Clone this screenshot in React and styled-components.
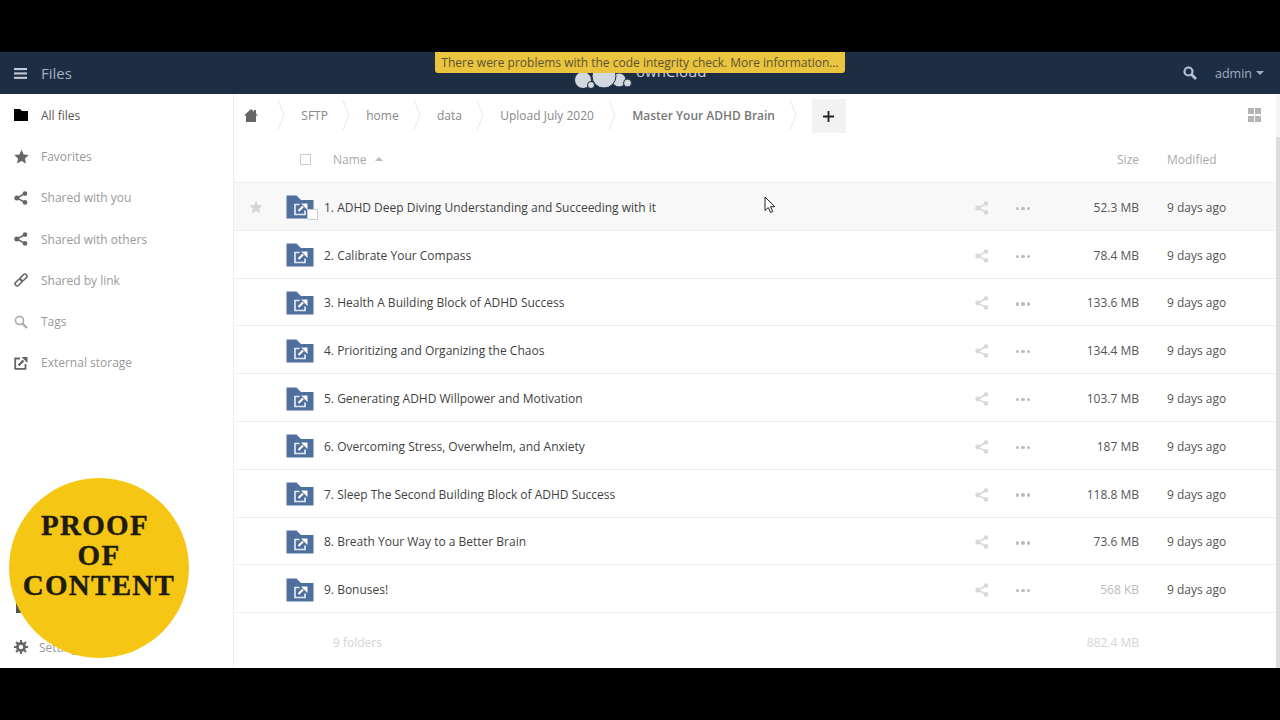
import React from 'react';
import styled, { createGlobalStyle } from 'styled-components';

const GlobalStyle = createGlobalStyle`
  html, body { margin: 0; padding: 0; background: #000; }
  body { font-family: "Open Sans", "Noto Sans", sans-serif; font-size: 13px; }
  * { box-sizing: border-box; }
`;

const Page = styled.div`
  position: relative;
  width: 1280px;
  height: 720px;
  padding: 52px 0;
  background: #000;
  overflow: hidden;
  display: flex;
  flex-direction: column;
`;

// Header
const Header = styled.header`
  position: relative;
  height: 42px;
  flex: none;
  background: #1d2d44;
  display: flex;
  align-items: center;
  padding: 0 16px 0 14px;
`;
const AppTitle = styled.div`
  margin-left: 14px;
  font-size: 15px;
  color: #a4afbd;
`;
const HeaderRight = styled.div`
  margin-left: auto;
  display: flex;
  align-items: center;
  color: #a4afbd;
`;
const UserName = styled.span`
  margin-left: 18px;
  font-size: 12.5px;
`;
const Caret = styled.span`
  width: 0;
  height: 0;
  margin-left: 4px;
  border-left: 4px solid transparent;
  border-right: 4px solid transparent;
  border-top: 4px solid #a4afbd;
`;
const Logo = styled.div`
  position: absolute;
  top: 8px;
  left: 574px;
  display: flex;
  align-items: flex-start;
`;
const LogoText = styled.span`
  margin: 1px 0 0 4px;
  font-size: 15px;
  line-height: 20px;
  color: #c9ced6;
`;
const Notice = styled.div`
  position: absolute;
  top: 0;
  left: 435px;
  width: 410px;
  height: 21px;
  background: #eac33f;
  border-radius: 0 0 3px 3px;
  color: #5b5330;
  font-size: 12px;
  line-height: 21px;
  text-align: center;
  white-space: nowrap;
`;

// Body
const Body = styled.div`
  flex: 1;
  min-height: 0;
  display: flex;
  background: #fff;
`;
const Sidebar = styled.nav`
  width: 234px;
  flex: none;
  border-right: 1px solid #eee;
  display: flex;
  flex-direction: column;
  padding-top: 0.5px;
`;
const NavItem = styled.div`
  height: 41.3px;
  flex: none;
  display: flex;
  align-items: center;
  padding-left: 14px;
  color: ${p => (p.$active ? '#555' : '#999')};
  font-size: 12px;
  white-space: nowrap;
`;
const NavIcon = styled.span`
  width: ${p => p.$width || 27}px;
  flex: none;
  display: flex;
  align-items: center;
  color: ${p => p.$color || '#666'};
`;
const NavBottom = styled.div`
  margin-top: auto;
`;

const Main = styled.main`
  flex: 1;
  min-width: 0;
  display: flex;
  flex-direction: column;
  overflow: hidden;
`;
const Breadcrumbs = styled.div`
  height: 42px;
  flex: none;
  display: flex;
  align-items: center;
  padding-left: 10px;
  padding-right: 15px;
`;
const HomeLink = styled.span`
  width: 33px;
  flex: none;
  display: flex;
  align-items: center;
  color: #666;
`;
const Crumb = styled.span`
  padding: 0 14px 0 16.3px;
  font-size: 12px;
  font-weight: ${p => (p.$current ? 600 : 400)};
  color: ${p => (p.$current ? '#777' : '#888')};
  white-space: nowrap;
`;
const Chevron = styled.svg`
  width: 8px;
  height: 32px;
  flex: none;
`;
const AddButton = styled.button`
  width: 34px;
  height: 34px;
  margin: 2px 0 0 14.500px;
  padding: 0;
  border: 0;
  border-radius: 2px;
  background: #f2f2f2;
  display: flex;
  align-items: center;
  justify-content: center;
`;
const ViewToggle = styled.span`
  margin-left: auto;
  display: grid;
  grid-template-columns: 6px 6px;
  grid-auto-rows: 6px;
  gap: 1.5px;
  & > i { background: #b4b4b4; }
`;

const TableHead = styled.div`
  height: 47px;
  flex: none;
  display: flex;
  align-items: center;
  border-bottom: 1px solid #eee;
  color: #aaa;
  font-size: 12px;
`;
const HeadCheck = styled.span`
  width: 11px;
  height: 11px;
  margin-left: 66px;
  border: 1px solid #ccc;
  background: #fff;
`;
const HeadName = styled.span`
  margin-left: 22px;
`;
const SortArrow = styled.span`
  width: 0;
  height: 0;
  margin-left: 8px;
  border-left: 4px solid transparent;
  border-right: 4px solid transparent;
  border-bottom: 4px solid #bbb;
`;
const HeadSize = styled.span`
  margin-left: auto;
`;
const DateCell = styled.span`
  width: 109px;
  margin-left: 28px;
  flex: none;
  color: ${p => p.$color || '#555'};
  font-size: 12px;
  white-space: nowrap;
`;

const Row = styled.div`
  height: 47.8px;
  flex: none;
  display: flex;
  align-items: center;
  padding-top: 2px;
  border-bottom: 1px solid #eee;
  background: ${p => (p.$hover ? '#f8f8f8' : '#fff')};
`;
const StarCell = styled.span`
  width: 52px;
  flex: none;
  padding-left: 15px;
  display: flex;
  align-items: center;
  color: #d6d6d6;
`;
const FolderCell = styled.span`
  position: relative;
  width: 38px;
  flex: none;
  display: flex;
  align-items: center;
`;
const RowCheck = styled.span`
  position: absolute;
  left: 21px;
  top: 14px;
  width: 11px;
  height: 11px;
  border: 1px solid #ccc;
  border-radius: 1px;
  background: #fff;
`;
const FileName = styled.span`
  width: 648px;
  flex: none;
  color: #3f3f3f;
  font-size: 12px;
  white-space: nowrap;
`;
const ShareAction = styled.span`
  width: 44px;
  flex: none;
  padding-left: 3px;
  margin-top: 1px;
  display: flex;
  align-items: center;
  justify-content: flex-start;
  color: #d8d8d8;
`;
const MoreAction = styled.span`
  flex: none;
  display: flex;
  gap: 2px;
  margin-top: 2px;
  & > i {
    width: 3.4px;
    height: 3.4px;
    border-radius: 50%;
    background: #bcbcbc;
  }
`;
const SizeCell = styled.span`
  margin-left: auto;
  color: ${p => p.$color};
  font-size: 12px;
  white-space: nowrap;
`;
const Summary = styled.div`
  height: 57px;
  flex: none;
  display: flex;
  align-items: center;
  padding-top: 2px;
  color: #d4d4d4;
  font-size: 12px;
`;
const SummaryCount = styled.span`
  margin-left: 99px;
`;

const ScrollTrack = styled.div`
  width: 4px;
  flex: none;
  background: #f4f4f4;
  display: flex;
  flex-direction: column;
`;
const ScrollThumb = styled.div`
  margin-top: 43px;
  flex: 1;
  background: #dcdcdc;
`;

// Overlays
const Badge = styled.div`
  position: absolute;
  left: 9px;
  top: 478px;
  width: 180px;
  height: 180px;
  border-radius: 50%;
  background: #f6c614;
  display: flex;
  flex-direction: column;
  align-items: center;
  padding-top: 32px;
  color: #1e1b10;
  font-family: "Liberation Serif", "DejaVu Serif", serif;
  font-weight: 700;
  font-size: 29px;
  line-height: 30px;
  letter-spacing: 1.3px;
  -webkit-text-stroke: 0.4px #1e1b10;
  & > span:first-child { margin-right: 8px; }
`;
const Pointer = styled.svg`
  position: absolute;
  left: 764px;
  top: 196px;
`;

const ShareIcon = ({ size = 14 }) => (
  <svg width={size} height={size} viewBox="0 0 14 14" fill="currentColor">
    <circle cx="2.8" cy="7" r="2.5" />
    <circle cx="11" cy="2.6" r="2.3" />
    <circle cx="11" cy="11.4" r="2.3" />
    <path d="M2.8 7 11 2.6M2.8 7 11 11.4" stroke="currentColor" strokeWidth="1.5" fill="none" />
  </svg>
);

const StarIcon = ({ size = 14 }) => (
  <svg width={size} height={size} viewBox="0 0 24 24" fill="currentColor">
    <path d="M12 1l3.4 7.6 8.2.9-6.1 5.5 1.7 8.1L12 19l-7.2 4.1 1.7-8.1L.4 9.5l8.2-.9z" />
  </svg>
);

const ExternalIcon = ({ size = 14, color = '#666' }) => (
  <svg width={size} height={size} viewBox="0 0 14 14" fill="none">
    <path d="M6 2.500H1.200v10.300h10.300V8" stroke={color} strokeWidth="1.800" />
    <path d="M4.500 9.500 9.500 4.500" stroke={color} strokeWidth="2.400" />
    <path d="M7.500 1H13.500V7z" fill={color} />
  </svg>
);

const FolderIcon = () => (
  <svg width="28" height="24" viewBox="0 0 28 24">
    <path d="M0.500 0.500h10l4.500 4.500h12.500v18.500H0.500z" fill="#4f6f9d" />
    <path d="M13.500 9.500H9v10h10V15.500" stroke="#e3e9f1" strokeWidth="1.700" fill="none" />
    <path d="M12.500 16 17 11.500" stroke="#fff" strokeWidth="2.200" />
    <path d="M15 8.500H21.500V15z" fill="#fff" />
  </svg>
);

const Hamburger = () => (
  <svg width="13" height="11" viewBox="0 0 13 11" fill="#c3cbd5">
    <rect y="0" width="13" height="2.100" />
    <rect y="4.400" width="13" height="2.100" />
    <rect y="8.800" width="13" height="2.100" />
  </svg>
);

const SearchIcon = ({ size = 14, color = '#b9c2ce', weight = 2.2 }) => (
  <svg width={size} height={size} viewBox="0 0 14 14" fill="none" stroke={color}>
    <circle cx="5.500" cy="5.500" r="4" strokeWidth={weight} />
    <path d="M8.500 8.500 13 13" strokeWidth={weight + 0.6} />
  </svg>
);

const CloudLogo = () => (
  <svg width="58" height="30" viewBox="0 0 58 30" fill="#d3d7de" stroke="#1d2d44" strokeWidth="1">
    <circle cx="9" cy="20" r="8.500" />
    <circle cx="45" cy="20" r="7" />
    <circle cx="17" cy="25" r="3.500" />
    <circle cx="30" cy="16" r="12" />
    <circle cx="53.500" cy="23" r="4" />
  </svg>
);

const crumbs = ['SFTP', 'home', 'data', 'Upload July 2020'];

const CrumbChevron = () => (
  <Chevron viewBox="0 0 8 32">
    <path d="M1 1l6 15-6 15" stroke="#e8e8e8" fill="none" />
  </Chevron>
);

const navItems = [
  { label: 'Favorites', icon: <StarIcon size={15} /> },
  { label: 'Shared with you', icon: <ShareIcon /> },
  { label: 'Shared with others', icon: <ShareIcon /> },
  {
    label: 'Shared by link',
    icon: (
      <svg width="14" height="14" viewBox="0 0 14 14" fill="none" stroke="#666" strokeWidth="1.500">
        <rect x="0.500" y="7.400" width="8" height="4.200" rx="2.100" transform="rotate(-45 4.500 9.500)" />
        <rect x="5.500" y="2.400" width="8" height="4.200" rx="2.100" transform="rotate(-45 9.500 4.500)" />
      </svg>
    ),
  },
  { label: 'Tags', icon: <SearchIcon color="#aaa" weight={1.6} /> },
  { label: 'External storage', icon: <ExternalIcon /> },
];

const files = [
  { name: '1. ADHD Deep Diving Understanding and Succeeding with it', size: '52.3 MB', color: '#555', hover: true },
  { name: '2. Calibrate Your Compass', size: '78.4 MB', color: '#555' },
  { name: '3. Health A Building Block of ADHD Success', size: '133.6 MB', color: '#555' },
  { name: '4. Prioritizing and Organizing the Chaos', size: '134.4 MB', color: '#555' },
  { name: '5. Generating ADHD Willpower and Motivation', size: '103.7 MB', color: '#555' },
  { name: '6. Overcoming Stress, Overwhelm, and Anxiety', size: '187 MB', color: '#555' },
  { name: '7. Sleep The Second Building Block of ADHD Success', size: '118.8 MB', color: '#555' },
  { name: '8. Breath Your Way to a Better Brain', size: '73.6 MB', color: '#555' },
  { name: '9. Bonuses!', size: '568 KB', color: '#bbb' },
];

export default function App() {
  return (
    <Page>
      <GlobalStyle />
      <Header>
        <Hamburger />
        <AppTitle>Files</AppTitle>
        <Logo>
          <CloudLogo />
          <LogoText>ownCloud</LogoText>
        </Logo>
        <Notice>There were problems with the code integrity check. More information…</Notice>
        <HeaderRight>
          <SearchIcon />
          <UserName>admin</UserName>
          <Caret />
        </HeaderRight>
      </Header>
      <Body>
        <Sidebar>
          <NavItem $active>
            <NavIcon $color="#000">
              <svg width="14" height="12" viewBox="0 0 14 12" fill="currentColor">
                <path d="M0 0h6l2 2h6v10H0z" />
              </svg>
            </NavIcon>
            All files
          </NavItem>
          {navItems.map(item => (
            <NavItem key={item.label}>
              <NavIcon>{item.icon}</NavIcon>
              {item.label}
            </NavItem>
          ))}
          <NavBottom>
            <NavItem>
              <NavIcon $color="#555">
                <svg width="14" height="14" viewBox="0 0 14 14" fill="currentColor">
                  <path d="M2 0h10v14H2z" />
                </svg>
              </NavIcon>
              Deleted files
            </NavItem>
            <NavItem>
              <NavIcon $width={25}>
                <svg width="14" height="14" viewBox="0 0 14 14" fill="none" stroke="#666">
                  <circle cx="7" cy="7" r="3.600" strokeWidth="2.800" />
                  <path
                    d="M7 0v3M7 11v3M0 7h3M11 7h3M2 2l2 2M10 10l2 2M12 2l-2 2M4 10l-2 2"
                    strokeWidth="2"
                  />
                </svg>
              </NavIcon>
              Settings
            </NavItem>
          </NavBottom>
        </Sidebar>
        <Main>
          <Breadcrumbs>
            <HomeLink>
              <svg width="14" height="13" viewBox="0 0 14 13" fill="currentColor">
                <path d="M7 0l3 2.800V1h2v3.600l2 1.900h-2V13H2V6.500H0z" />
              </svg>
            </HomeLink>
            <CrumbChevron />
            {crumbs.map(label => (
              <React.Fragment key={label}>
                <Crumb>{label}</Crumb>
                <CrumbChevron />
              </React.Fragment>
            ))}
            <Crumb $current>Master Your ADHD Brain</Crumb>
            <CrumbChevron />
            <AddButton aria-label="New">
              <svg width="11" height="11" viewBox="0 0 11 11" fill="#222">
                <path d="M4.600 0h1.800v4.600H11v1.800H6.400V11H4.600V6.400H0V4.600h4.600z" />
              </svg>
            </AddButton>
            <ViewToggle>
              <i />
              <i />
              <i />
              <i />
            </ViewToggle>
          </Breadcrumbs>
          <TableHead>
            <HeadCheck />
            <HeadName>Name</HeadName>
            <SortArrow />
            <HeadSize>Size</HeadSize>
            <DateCell $color="#aaa">Modified</DateCell>
          </TableHead>
          {files.map(file => (
            <Row key={file.name} $hover={file.hover}>
              <StarCell>{file.hover && <StarIcon size={14} />}</StarCell>
              <FolderCell>
                <FolderIcon />
                {file.hover && <RowCheck />}
              </FolderCell>
              <FileName>{file.name}</FileName>
              <ShareAction>
                <ShareIcon />
              </ShareAction>
              <MoreAction>
                <i />
                <i />
                <i />
              </MoreAction>
              <SizeCell $color={file.color}>{file.size}</SizeCell>
              <DateCell>9 days ago</DateCell>
            </Row>
          ))}
          <Summary>
            <SummaryCount>9 folders</SummaryCount>
            <SizeCell $color="#d4d4d4">882.4 MB</SizeCell>
            <DateCell />
          </Summary>
        </Main>
        <ScrollTrack>
          <ScrollThumb />
        </ScrollTrack>
      </Body>
      <Badge>
        <span>PROOF</span>
        <span>OF</span>
        <span>CONTENT</span>
      </Badge>
      <Pointer width="12" height="18" viewBox="0 0 12 18">
        <path d="M1 1v13.500l3.300-3 2.200 5 2.200-1-2.200-4.800h4.300z" fill="#fff" stroke="#222" strokeWidth="1" />
      </Pointer>
    </Page>
  );
}
